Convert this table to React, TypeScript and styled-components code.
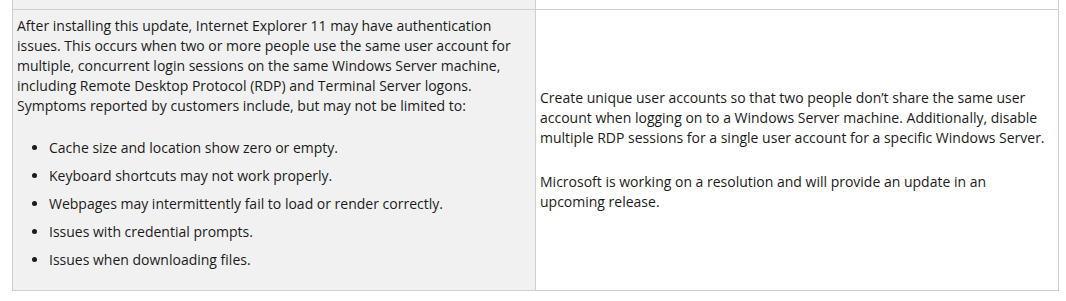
import React from 'react';
import styled, { createGlobalStyle } from 'styled-components';

const GlobalStyle = createGlobalStyle`
    html, body {
        margin: 0;
        padding: 0;
        background: #ffffff;
    }
    body {
        font-family: 'Open Sans', 'Noto Sans', sans-serif;
        color: #1b1b1b;
    }
`;

export const Page = styled.div`
    padding: 0 8px 0 12px;
    width: 1066px;
    box-sizing: border-box;
`;

export const IssueTable = styled.table`
    width: 1047px;
    border-collapse: collapse;
    table-layout: fixed;
`;

export const Cell = styled.td<{ $shaded?: boolean }>`
    border: 1px solid #cfcfcf;
    background-color: ${(p) => (p.$shaded ? '#f1f1f1' : '#ffffff')};
    padding: ${(p) => (p.$shaded ? '6px 4px 0 4px' : '0 4px 0 4px')};
    font-size: 14px;
    line-height: 20px;
    vertical-align: ${(p) => (p.$shaded ? 'top' : 'middle')};
`;

export const StubRow = styled.tr`
    height: 9px;
    & > td {
        border-top: none;
        padding: 0;
    }
`;

export const Paragraph = styled.p`
    margin: 0;
    & + & {
        margin-top: 24px;
    }
`;

export const SymptomList = styled.ul`
    margin: 22px 0 20px 0;
    padding-left: 32px;
`;

export const Symptom = styled.li`
    margin-top: 8px;
`;

const symptoms = [
    'Cache size and location show zero or empty.',
    'Keyboard shortcuts may not work properly.',
    'Webpages may intermittently fail to load or render correctly.',
    'Issues with credential prompts.',
    'Issues when downloading files.',
];

function App() {
    return (
        <Page>
            <GlobalStyle />
            <IssueTable>
                <tbody>
                    <StubRow>
                        <Cell $shaded />
                        <Cell />
                    </StubRow>
                    <tr>
                        <Cell $shaded>
                            <Paragraph>
                                After installing this update, Internet Explorer 11 may have authentication
                                <br />
                                issues. This occurs when two or more people use the same user account for
                                <br />
                                multiple, concurrent login sessions on the same Windows Server machine,
                                <br />
                                including Remote Desktop Protocol (RDP) and Terminal Server logons.
                                <br />
                                Symptoms reported by customers include, but may not be limited to:
                            </Paragraph>
                            <SymptomList>
                                {symptoms.map((s) => (
                                    <Symptom key={s}>{s}</Symptom>
                                ))}
                            </SymptomList>
                        </Cell>
                        <Cell>
                            <Paragraph>
                                Create unique user accounts so that two people don’t share the same user
                                <br />
                                account when logging on to a Windows Server machine. Additionally, disable
                                <br />
                                multiple RDP sessions for a single user account for a specific Windows Server.
                            </Paragraph>
                            <Paragraph>
                                Microsoft is working on a resolution and will provide an update in an
                                <br />
                                upcoming release.
                            </Paragraph>
                        </Cell>
                    </tr>
                </tbody>
            </IssueTable>
        </Page>
    );
}

export default App;
